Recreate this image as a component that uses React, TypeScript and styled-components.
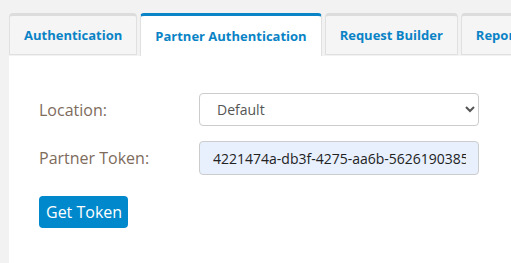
import styled, { createGlobalStyle } from 'styled-components'

const GlobalStyle = createGlobalStyle`
  html, body {
    margin: 0;
    padding: 0;
    background: #f2f2f2;
    font-family: 'Open Sans', 'Liberation Sans', sans-serif;
  }
`

const Page = styled.div`
  width: 511px;
  height: 263px;
  padding: 13px 0 0 9px;
  box-sizing: border-box;
  overflow: hidden;
`

const TabBar = styled.div`
  display: flex;
  gap: 3px;
  white-space: nowrap;
`

const Tab = styled.div<{ $active?: boolean }>`
  flex: none;
  box-sizing: border-box;
  height: ${({ $active }) => ($active ? '43px' : '42px')};
  padding: 0 14px 1px 14px;
  display: flex;
  align-items: center;
  font-size: 13px;
  font-weight: 700;
  color: #0a83c6;
  background: ${({ $active }) => ($active ? '#fff' : '#f5f5f5')};
  border: 1px solid #e0e0e0;
  border-top: 3px solid ${({ $active }) => ($active ? '#0a84c6' : '#dcdcdc')};
  border-bottom: ${({ $active }) => ($active ? 'none' : '1px solid #e0e0e0')};
  border-radius: 4px 4px 0 0;
`

const Panel = styled.div`
  background: #fff;
  height: 230px;
  padding: 38px 0 0 30px;
  box-sizing: border-box;
  display: flex;
  flex-direction: column;
  gap: 15px;
`

const Row = styled.div`
  display: flex;
  align-items: center;
`

const Label = styled.label`
  width: 160px;
  font-size: 16px;
  color: #7d6b5c;
`

const Select = styled.select`
  width: 280px;
  height: 33px;
  margin-top: -1px;
  box-sizing: border-box;
  border: 1px solid #cccccc;
  border-radius: 4px;
  background: #fff;
  padding: 0 10px 0 13px;
  font-family: 'Open Sans', 'Liberation Sans', sans-serif;
  font-size: 14px;
  color: #555;
`

const TokenInput = styled.input`
  width: 280px;
  height: 34px;
  box-sizing: border-box;
  border: 1px solid #cccccc;
  border-radius: 4px;
  background: #e8f0fe;
  padding: 0 12px 0 13px;
  font-family: 'Open Sans', 'Liberation Sans', sans-serif;
  font-size: 14px;
  color: #222;
  outline: none;
`

const Button = styled.button`
  align-self: flex-start;
  margin-top: 6px;
  height: 32px;
  padding: 0 6px 1px 7px;
  border: none;
  border-radius: 4px;
  background: #0088cc;
  color: #fff;
  font-family: 'Open Sans', 'Liberation Sans', sans-serif;
  font-size: 16px;
`

const App = () => {
  return (
    <Page>
      <GlobalStyle />
      <TabBar>
        <Tab>Authentication</Tab>
        <Tab $active>Partner Authentication</Tab>
        <Tab>Request Builder</Tab>
        <Tab>Reports</Tab>
      </TabBar>
      <Panel>
        <Row>
          <Label>Location:</Label>
          <Select defaultValue="Default">
            <option>Default</option>
          </Select>
        </Row>
        <Row>
          <Label>Partner Token:</Label>
          <TokenInput defaultValue="4221474a-db3f-4275-aa6b-56261903850a" />
        </Row>
        <Button>Get Token</Button>
      </Panel>
    </Page>
  )
}

export default App
